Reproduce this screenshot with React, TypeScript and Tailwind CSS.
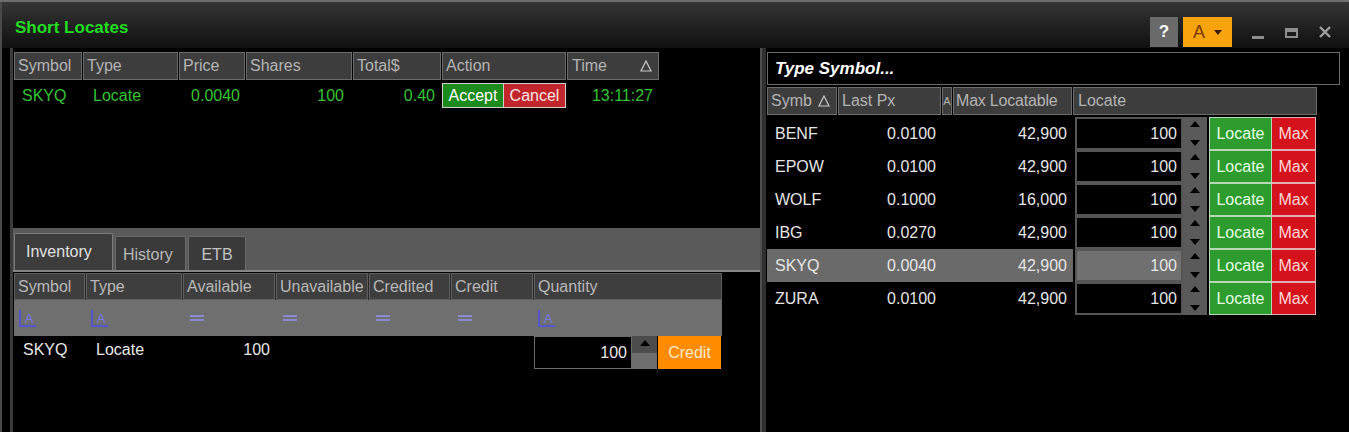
import React from 'react';

const topCols = [
  { label: 'Symbol', w: 'w-[68px]' },
  { label: 'Type', w: 'w-[95px]' },
  { label: 'Price', w: 'w-[66px]' },
  { label: 'Shares', w: 'w-[106px]' },
  { label: 'Total$', w: 'w-[88px]' },
  { label: 'Action', w: 'w-[124px]' },
];

const invCols = [
  { label: 'Symbol', w: 'w-[71px]' },
  { label: 'Type', w: 'w-[96px]' },
  { label: 'Available', w: 'w-[92px]' },
  { label: 'Unavailable', w: 'w-[92px]' },
  { label: 'Credited', w: 'w-[81px]' },
  { label: 'Credit', w: 'w-[82px]' },
  { label: 'Quantity', w: 'w-[188px]' },
];

const locates = [
  { sym: 'BENF', px: '0.0100', max: '42,900' },
  { sym: 'EPOW', px: '0.0100', max: '42,900' },
  { sym: 'WOLF', px: '0.1000', max: '16,000' },
  { sym: 'IBG', px: '0.0270', max: '42,900' },
  { sym: 'SKYQ', px: '0.0040', max: '42,900', selected: true },
  { sym: 'ZURA', px: '0.0100', max: '42,900' },
];

const SortTri = () => (
  <svg width="12" height="12" viewBox="0 0 12 12">
    <polygon points="6,1 11,11 1,11" fill="none" stroke="#c8c8c8" strokeWidth="1.2" />
  </svg>
);

const Up = () => (
  <svg width="10" height="6" viewBox="0 0 10 6">
    <polygon points="0,6 5,0 10,6" fill="#000" />
  </svg>
);

const Down = () => (
  <svg width="10" height="6" viewBox="0 0 10 6">
    <polygon points="0,0 10,0 5,6" fill="#000" />
  </svg>
);

// little "A" filter glyph in the inventory filter row
const FilterA = () => (
  <span className="inline-flex items-end justify-center w-[17px] h-[17px] border-l-2 border-b-2 border-[#5656c8] text-[13px] leading-none text-[#7a7ae8] pl-[1px]">
    A
  </span>
);

const FilterEq = () => <span className="block w-[14px] h-[6px] border-t-2 border-b-2 border-[#8a8ad0]" />;

const App = () => {
  return (
    <div className="w-[1349px] h-[432px] bg-black overflow-hidden flex flex-col border-t-2 border-[#6e6e6e] font-['Liberation_Sans',Arial,sans-serif] text-[16px]">
      {/* title bar */}
      <div className="h-[46px] flex bg-linear-to-b from-[#363636] to-[#101010] border-l-2 border-[#4a4a4a]">
        <div className="self-center pt-[6px] pl-[13px] text-[17px] font-bold text-[#22dd22]">Short Locates</div>
        <div className="ml-auto self-end mb-[1px] flex items-center">
          <div className="w-[28px] h-[30px] bg-[#6a6a6a] flex items-center justify-center text-[17px] font-bold text-white">?</div>
          <div className="ml-[5px] w-[49px] h-[30px] bg-[#f9a30f] flex items-center pl-[10px] gap-[9px]">
            <span className="text-[18px] text-[#7a3800]">A</span>
            <svg width="8" height="5" viewBox="0 0 8 5">
              <polygon points="0,0 8,0 4,5" fill="#3a1c00" />
            </svg>
          </div>
          <span className="block ml-[20px] w-[12px] h-[3px] mt-[10px] bg-[#8e8e8e]" />
          <span className="block ml-[21px] w-[13px] h-[10px] mt-[2px] border-2 border-t-[4px] border-[#8e8e8e]" />
          <svg className="ml-[20px] mr-[17px]" width="14" height="14" viewBox="0 0 14 14">
            <path d="M2 2 L12 12 M12 2 L2 12" stroke="#a0a0a0" strokeWidth="2.4" />
          </svg>
        </div>
      </div>

      {/* body */}
      <div className="flex-1 flex border-l-2 border-[#4a4a4a] pl-[8px]">
        {/* left panel */}
        <div className="w-[752px] flex flex-col border-l-[3px] border-[#3c3c3c] border-r-2 border-r-[#4e4e4e]">
          <div className="h-[180px] pt-[4px] pl-[1px]">
            <div className="flex gap-px h-[28px]">
              {topCols.map((c) => (
                <div key={c.label} className={`${c.w} border border-[#6c6c6c] bg-[#3d3d3d] text-[#b4b4b4] pl-[3px] flex items-center`}>
                  {c.label}
                </div>
              ))}
              <div className="w-[92px] border border-[#6c6c6c] bg-[#3d3d3d] text-[#b4b4b4] pl-[4px] pr-[6px] flex items-center justify-between">
                Time
                <SortTri />
              </div>
            </div>
            <div className="flex gap-px h-[25px] mt-[3px] text-[#33c433]">
              <div className="w-[68px] pl-[8px] flex items-center">SKYQ</div>
              <div className="w-[95px] pl-[10px] flex items-center">Locate</div>
              <div className="w-[66px] pr-[5px] flex items-center justify-end">0.0040</div>
              <div className="w-[106px] pr-[8px] flex items-center justify-end">100</div>
              <div className="w-[88px] pr-[6px] flex items-center justify-end">0.40</div>
              <div className="w-[124px] flex">
                <div className="w-[62px] bg-[#1c8a1c] border border-[#cfcfcf] text-white flex items-center justify-center">Accept</div>
                <div className="w-[62px] bg-[#c0262c] border border-[#cfcfcf] border-l-0 text-[#ffe2e2] flex items-center justify-center">Cancel</div>
              </div>
              <div className="w-[92px] pr-[6px] flex items-center justify-end">13:11:27</div>
            </div>
          </div>

          {/* tabs */}
          <div className="h-[42px] bg-[#5a5a5a] flex items-end pl-[1px] gap-[2px]">
            <div className="w-[99px] h-[37px] bg-[#3c3c3c] border border-b-0 border-[#7c7c7c] rounded-t-[2px] text-[#e0e0e0] pl-[11px] flex items-center">Inventory</div>
            <div className="w-[71px] h-[34px] bg-[#3a3a3a] border border-b-0 border-[#6a6a6a] rounded-t-[2px] text-[#b8b8b8] pl-[7px] flex items-center pt-[2px]">History</div>
            <div className="w-[58px] h-[34px] bg-[#3a3a3a] border border-b-0 border-[#6a6a6a] rounded-t-[2px] text-[#c4c4c4] flex items-center justify-center pt-[2px]">ETB</div>
          </div>

          {/* inventory grid */}
          <div className="flex-1 border-t-2 border-[#858585] pt-[1px] pl-[1px]">
            <div className="flex gap-px h-[27px] w-[708px] bg-[#2a2a2a]">
              {invCols.map((c) => (
                <div key={c.label} className={`${c.w} border border-[#5e5e5e] bg-[#3e3e3e] text-[#b8b8b8] pl-[3px] flex items-center overflow-hidden whitespace-nowrap`}>
                  {c.label}
                </div>
              ))}
            </div>
            <div className="flex gap-px h-[36px] w-[708px] bg-[#6f6f6f] items-center">
              <div className="w-[71px] pl-[5px] flex"><FilterA /></div>
              <div className="w-[96px] pl-[5px] flex"><FilterA /></div>
              <div className="w-[92px] pl-[7px] flex"><FilterEq /></div>
              <div className="w-[92px] pl-[7px] flex"><FilterEq /></div>
              <div className="w-[81px] pl-[7px] flex"><FilterEq /></div>
              <div className="w-[82px] pl-[7px] flex"><FilterEq /></div>
              <div className="w-[188px] pl-[4px] flex"><FilterA /></div>
            </div>
            <div className="flex gap-px h-[33px] w-[708px] text-[#e8e8e8]">
              <div className="w-[71px] pl-[9px] pt-[2px] flex items-start">SKYQ</div>
              <div className="w-[96px] pl-[10px] pt-[2px] flex items-start">Locate</div>
              <div className="w-[92px] pr-[5px] pt-[2px] flex items-start justify-end">100</div>
              <div className="w-[92px]" />
              <div className="w-[81px]" />
              <div className="w-[82px]" />
              <div className="w-[188px] flex">
                <div className="w-[98px] border border-[#6a6a6a] bg-black pr-[4px] flex items-center justify-end">100</div>
                <div className="w-[25px] flex flex-col">
                  <div className="h-1/2 bg-[#4c4c4c] flex items-start justify-center pt-[4px]"><Up /></div>
                  <div className="h-1/2 bg-[#6e6e6e]" />
                </div>
                <div className="w-[63px] ml-[1px] bg-[#ff8c00] text-[#ffe9cc] flex items-center justify-center">Credit</div>
              </div>
            </div>
          </div>
        </div>

        {/* right panel */}
        <div className="flex-1 border-l-[4px] border-[#303030] pl-[1px] pt-[4px]">
          <div className="w-[573px] h-[33px] border border-[#6a6a6a] bg-black pl-[7px] flex items-center text-[17px] italic font-bold text-white">
            Type Symbol...
          </div>
          <div className="flex gap-px h-[28px] w-[550px] mt-[2px] text-[#b4b4b4]">
            <div className="w-[70px] border border-[#6c6c6c] bg-[#3d3d3d] pl-[3px] pr-[6px] flex items-center justify-between">
              Symb
              <SortTri />
            </div>
            <div className="w-[103px] border border-[#6c6c6c] bg-[#3d3d3d] pl-[3px] flex items-center">Last Px</div>
            <div className="w-[10px] border border-[#6c6c6c] bg-[#3d3d3d] flex items-center justify-center text-[11px]">A</div>
            <div className="w-[119px] border border-[#6c6c6c] bg-[#3d3d3d] pl-[2px] flex items-center whitespace-nowrap tracking-[-0.2px]">Max Locatable</div>
            <div className="flex-1 border border-[#6c6c6c] bg-[#3d3d3d] pl-[4px] flex items-center">Locate</div>
          </div>
          <div className="mt-[2px] flex flex-col">
            {locates.map((r) => (
              <div key={r.sym} className="flex h-[33px]">
                <div className={`w-[306px] flex text-[#e6e6e6] ${r.selected ? 'bg-[#6a6a6a]' : 'bg-black'}`}>
                  <div className="w-[71px] pl-[8px] flex items-center">{r.sym}</div>
                  <div className="w-[104px] pr-[6px] flex items-center justify-end">{r.px}</div>
                  <div className="w-[11px]" />
                  <div className="w-[120px] pr-[6px] flex items-center justify-end">{r.max}</div>
                </div>
                <div className={`w-[108px] ml-[2px] border-2 border-[#555] pr-[4px] flex items-center justify-end text-[#e6e6e6] ${r.selected ? 'bg-[#707070]' : 'bg-black'}`}>
                  100
                </div>
                <div className="w-[24px] bg-[#5a5a5a] flex flex-col items-center justify-between py-[4px]">
                  <Up />
                  <Down />
                </div>
                <div className="w-[63px] ml-[2px] bg-[#2d9b2d] border border-[#b8d8b8] text-[#e4ffe4] flex items-center justify-center">Locate</div>
                <div className="w-[44px] bg-[#d3121c] border border-l-0 border-[#e0b0b0] text-[#ffd6d6] flex items-center justify-center">Max</div>
              </div>
            ))}
          </div>
        </div>
      </div>
    </div>
  );
};

export default App;
